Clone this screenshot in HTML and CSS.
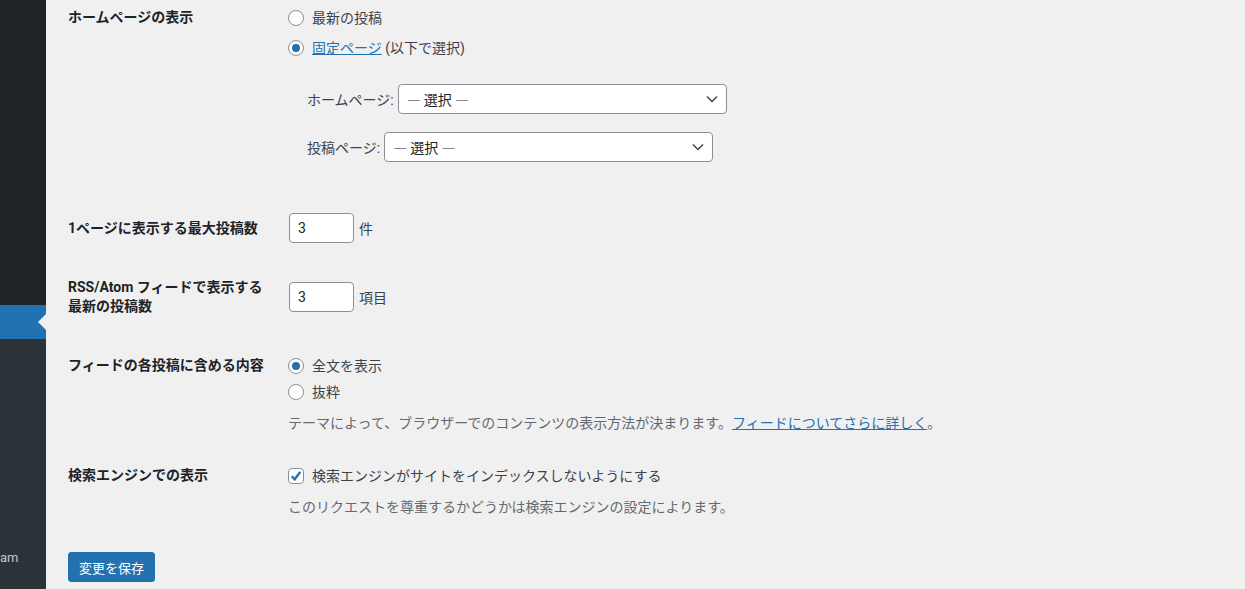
FILE: index.html
```html
<!DOCTYPE html>
<html lang="ja">
<head>
    <meta charset="UTF-8">
    <meta name="viewport" content="width=device-width, initial-scale=1.0">
    <title>表示設定</title>
    <link rel="stylesheet" href="styles.css">
</head>
<body>
    <div class="admin">
        <div class="sidebar">
            <div class="menu-top"></div>
            <div class="menu-current"></div>
            <div class="menu-sub">
                <div class="menu-item">am</div>
            </div>
        </div>

        <div class="content">
            <!-- ホームページの表示 -->
            <div class="form-row row-home">
                <div class="form-label">ホームページの表示</div>
                <div class="form-field">
                    <div class="choice"><span class="radio"></span>最新の投稿</div>
                    <div class="choice choice-gap"><span class="radio checked"></span><a href="#">固定ページ</a>&nbsp;(以下で選択)</div>
                    <div class="sub-list">
                        <div class="sub-item">ホームページ:
                            <div class="select">— 選択 —
                                <svg class="chevron" width="12" height="8" viewBox="0 0 12 8"><path d="M1 1.5l5 5 5-5" fill="none" stroke="#3c434a" stroke-width="1.5"/></svg>
                            </div>
                        </div>
                        <div class="sub-item sub-gap">投稿ページ:
                            <div class="select">— 選択 —
                                <svg class="chevron" width="12" height="8" viewBox="0 0 12 8"><path d="M1 1.5l5 5 5-5" fill="none" stroke="#3c434a" stroke-width="1.5"/></svg>
                            </div>
                        </div>
                    </div>
                </div>
            </div>

            <!-- 最大投稿数 -->
            <div class="form-row row-posts">
                <div class="form-label">1ページに表示する最大投稿数</div>
                <div class="form-field inline">
                    <div class="number">3</div>件
                </div>
            </div>

            <!-- RSS -->
            <div class="form-row row-rss">
                <div class="form-label">RSS/Atom フィードで表示する<br>最新の投稿数</div>
                <div class="form-field inline">
                    <div class="number">3</div>項目
                </div>
            </div>

            <!-- フィード -->
            <div class="form-row row-feed">
                <div class="form-label">フィードの各投稿に含める内容</div>
                <div class="form-field">
                    <div class="choice"><span class="radio checked"></span>全文を表示</div>
                    <div class="choice choice-tight"><span class="radio"></span>抜粋</div>
                    <p class="description">テーマによって、ブラウザーでのコンテンツの表示方法が決まります。<a href="#">フィードについてさらに詳しく</a>。</p>
                </div>
            </div>

            <!-- 検索エンジン -->
            <div class="form-row row-search">
                <div class="form-label">検索エンジンでの表示</div>
                <div class="form-field">
                    <div class="choice">
                        <span class="checkbox">
                            <svg width="14" height="14" viewBox="0 0 14 14"><path d="M2.8 7.2l2.9 3.1 5.6-7.4" fill="none" stroke="#2271b1" stroke-width="2.4"/></svg>
                        </span>検索エンジンがサイトをインデックスしないようにする
                    </div>
                    <p class="description">このリクエストを尊重するかどうかは検索エンジンの設定によります。</p>
                </div>
            </div>

            <button class="button-primary">変更を保存</button>
        </div>
    </div>
</body>
</html>
```

FILE: styles.css
```css
:root {
    --primary: #2271b1;
    --background: #f0f0f1;
    --text: #3c434a;
    --text-dark: #1d2327;
    --text-light: #646970;
    --border: #8c8f94;
}

html, body {
    margin: 0;
    height: 100%;
    overflow: hidden;
}

body {
    font-family: Roboto, "Noto Sans CJK JP", sans-serif;
    font-size: 14px;
    background: var(--background);
    color: var(--text);
}

a {
    color: var(--primary);
}

.admin {
    display: flex;
    height: 100%;
}

/* サイドバー */
.sidebar {
    width: 46px;
    flex-shrink: 0;
    display: flex;
    flex-direction: column;
    overflow: hidden;
}

.menu-top {
    height: 305px;
    background: #1d2327;
}

.menu-current {
    height: 34px;
    background: var(--primary);
    position: relative;
}

.menu-current::after {
    content: "";
    position: absolute;
    right: 0;
    top: 9px;
    border: 8px solid transparent;
    border-right-color: var(--background);
}

.menu-sub {
    flex: 1;
    background: #2c3338;
    padding-top: 210px;
}

.menu-item {
    color: #c3c4c7;
    font-size: 13px;
    line-height: 18px;
    white-space: nowrap;
}

/* フォーム */
.content {
    flex: 1;
    padding: 8px 0 0 22px;
}

.form-row {
    display: flex;
}

.form-label {
    width: 200px;
    padding-right: 10px;
    flex-shrink: 0;
    font-weight: bold;
    color: var(--text-dark);
    line-height: 19px;
}

.form-field {
    padding-left: 10px;
}

.row-posts { margin-top: 51px; }
.row-posts .form-label { padding-top: 6px; }

.row-rss { margin-top: 35px; }
.row-rss .form-field { padding-top: 4px; }

.row-feed { margin-top: 40px; }
.row-search { margin-top: 33px; }

.choice {
    display: flex;
    align-items: center;
    height: 20px;
    line-height: 20px;
    white-space: nowrap;
}

.choice-gap { margin-top: 10px; }
.choice-tight { margin-top: 6px; }

.radio {
    width: 14px;
    height: 14px;
    border: 1px solid var(--border);
    border-radius: 50%;
    background: #fff;
    margin-right: 8px;
    display: flex;
    align-items: center;
    justify-content: center;
}

.radio.checked::before {
    content: "";
    width: 8px;
    height: 8px;
    border-radius: 50%;
    background: var(--primary);
}

.checkbox {
    width: 14px;
    height: 14px;
    border: 1px solid var(--border);
    border-radius: 4px;
    background: #fff;
    margin-right: 8px;
    display: flex;
    align-items: center;
    justify-content: center;
}

.sub-list {
    margin: 26px 0 0 19px;
}

.sub-item {
    display: flex;
    align-items: center;
    gap: 4px;
    white-space: nowrap;
}

.sub-gap { margin-top: 18px; }

.select {
    width: 329px;
    height: 30px;
    box-sizing: border-box;
    border: 1px solid var(--border);
    border-radius: 4px;
    background: #fff;
    padding: 0 8px;
    display: flex;
    align-items: center;
    justify-content: space-between;
    color: var(--text-dark);
    font-family: "Noto Sans CJK JP", sans-serif;
}

.inline {
    display: flex;
    align-items: center;
    gap: 5px;
    height: 30px;
}

.number {
    width: 65px;
    height: 30px;
    margin-left: 1px;
    box-sizing: border-box;
    border: 1px solid var(--border);
    border-radius: 4px;
    background: #fff;
    padding-left: 8px;
    display: flex;
    align-items: center;
    color: var(--text-dark);
}

.description {
    margin: 11px 0 0;
    line-height: 20px;
    color: var(--text-light);
}

.button-primary {
    margin-top: 35px;
    height: 30px;
    padding: 0 10px;
    border: 1px solid var(--primary);
    border-radius: 3px;
    background: var(--primary);
    color: #fff;
    font-family: inherit;
    font-size: 13px;
    cursor: pointer;
}
```
